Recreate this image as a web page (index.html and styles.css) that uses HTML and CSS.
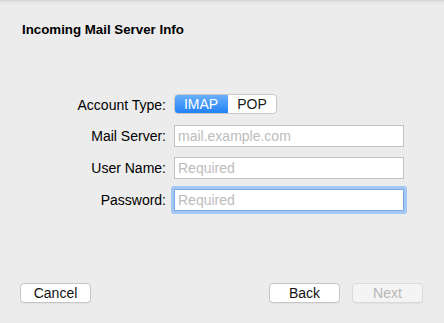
FILE: index.html
```html
<!DOCTYPE html>
<html lang="en">
<head>
    <meta charset="UTF-8">
    <title>Incoming Mail Server Info</title>
    <link rel="stylesheet" href="styles.css">
</head>
<body>
    <div class="window">
        <h1 class="title">Incoming Mail Server Info</h1>

        <div class="form">
            <label class="label">Account Type:</label>
            <div class="segmented">
                <span class="segment active">IMAP</span>
                <span class="segment">POP</span>
            </div>

            <label class="label">Mail Server:</label>
            <input class="field" type="text" placeholder="mail.example.com">

            <label class="label">User Name:</label>
            <input class="field" type="text" placeholder="Required">

            <label class="label">Password:</label>
            <input class="field focused" type="password" placeholder="Required">
        </div>

        <div class="footer">
            <button class="btn">Cancel</button>
            <div class="footer-right">
                <button class="btn">Back</button>
                <button class="btn disabled">Next</button>
            </div>
        </div>
    </div>
</body>
</html>
```

FILE: styles.css
```css
html, body {
    margin: 0;
    padding: 0;
}

body {
    background-color: #ececec;
    font-family: 'Liberation Sans', Arial, sans-serif;
    font-size: 14px;
    color: #000;
}

.window {
    display: flex;
    flex-direction: column;
    height: 100vh;
    box-sizing: border-box;
    background: linear-gradient(to bottom, #d2d2d2 0, #e4e4e4 2px, #ececec 5px);
}

.title {
    margin: 0;
    padding: 22px 0 0 22px;
    font-size: 13.3px;
    font-weight: bold;
    line-height: 16px;
}

.form {
    display: grid;
    grid-template-columns: 166px 230px;
    column-gap: 8px;
    row-gap: 10px;
    align-items: center;
    margin-top: 56px;
}

.label {
    text-align: right;
    line-height: 16px;
}

.segmented {
    display: flex;
    width: 103px;
    height: 20px;
    box-sizing: border-box;
    border: 1px solid #c8c8c8;
    border-radius: 4px;
    background-color: #fff;
    overflow: hidden;
    margin-bottom: 1px;
}

.segment {
    flex: 1;
    display: flex;
    align-items: center;
    justify-content: center;
    font-size: 14px;
    color: #1a1a1a;
}

.segment.active {
    flex: 0 0 54px;
    margin: -1px 0 -1px -1px;
    color: #fff;
    background: linear-gradient(to bottom, #6cb3fa, #1e7ef6);
    border-radius: 4px 0 0 4px;
}

.field {
    width: 230px;
    height: 22px;
    box-sizing: border-box;
    margin: 0;
    padding: 0 3px 0 3px;
    border: 1px solid #c2c2c2;
    background-color: #fff;
    font-family: 'Liberation Sans', Arial, sans-serif;
    font-size: 14px;
    outline: none;
}

.field::placeholder {
    color: #bcbcbc;
}

.field.focused {
    border-color: #7aa7e2;
    box-shadow: 0 0 0 3px #a2c7f4;
    border-radius: 1px;
}

.footer {
    margin-top: auto;
    display: flex;
    justify-content: space-between;
    padding: 0 21px 20px 20px;
}

.footer-right {
    display: flex;
    gap: 12px;
}

.btn {
    width: 71px;
    height: 20px;
    padding: 0;
    border: 1px solid #c6c6c6;
    border-radius: 4px;
    background-color: #fff;
    font-family: 'Liberation Sans', Arial, sans-serif;
    font-size: 14px;
    line-height: 16px;
    color: #111;
    box-shadow: 0 1px 0 rgba(0, 0, 0, 0.04);
}

.btn.disabled {
    background-color: #f4f4f4;
    border-color: #dadada;
    color: #b6b6b6;
}
```
